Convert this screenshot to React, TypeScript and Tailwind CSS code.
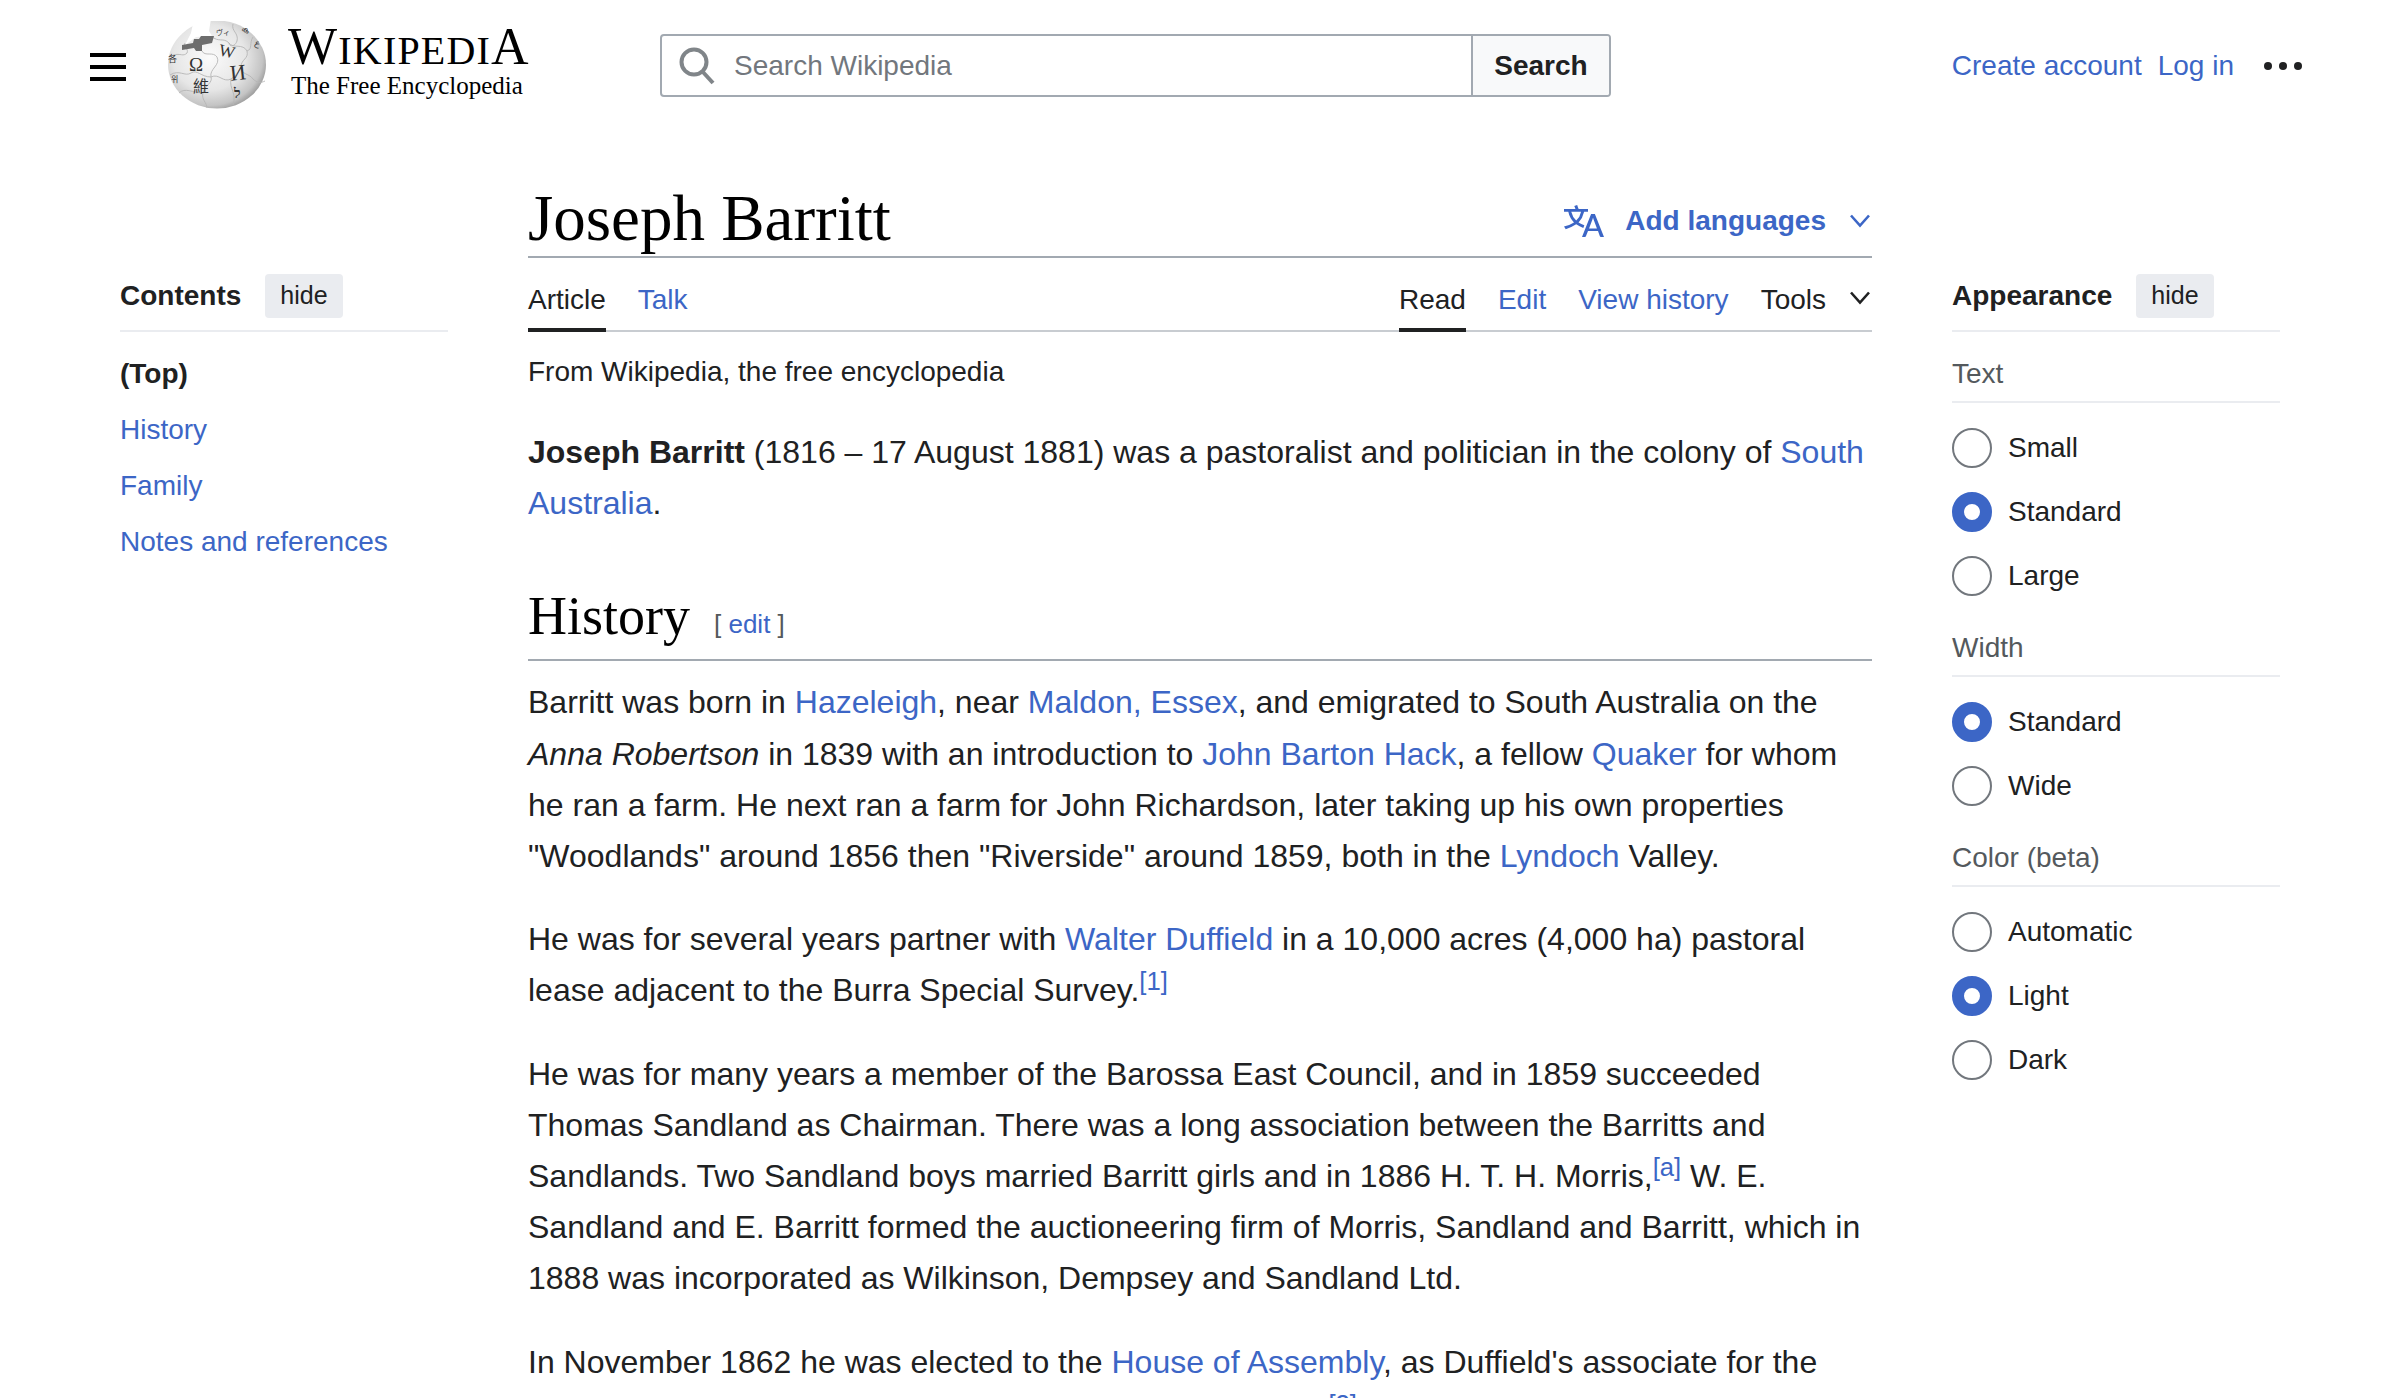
import React from 'react';

const serif = "font-['Liberation_Serif','Times_New_Roman',serif]";
const blue = '#3c66c6';

const contents = ['History', 'Family', 'Notes and references'];

const appearance = [
    { label: 'Text', options: ['Small', 'Standard', 'Large'], selected: 'Standard' },
    { label: 'Width', options: ['Standard', 'Wide'], selected: 'Standard' },
    { label: 'Color (beta)', options: ['Automatic', 'Light', 'Dark'], selected: 'Light' },
];

const A: React.FC<{ children: React.ReactNode }> = ({ children }) => (
    <a href="#" className="text-[#3c66c6]">{children}</a>
);

const Sup: React.FC<{ children: React.ReactNode }> = ({ children }) => (
    <sup className="text-[25.6px] leading-none text-[#3c66c6] top-[-11px]">{children}</sup>
);

const Chevron: React.FC<{ color: string }> = ({ color }) => (
    <svg width="20" height="14" viewBox="0 0 20 14" fill="none" stroke={color} strokeWidth="2.6">
        <path d="M1 1.5 L10 11.5 L19 1.5" />
    </svg>
);

const Globe: React.FC = () => (
    <svg width="100" height="90" viewBox="19 12 100 90" className="shrink-0">
        <defs>
            <radialGradient id="globe" cx="0.42" cy="0.42" r="0.62">
                <stop offset="0" stopColor="#fbfbfb" />
                <stop offset="0.6" stopColor="#e6e6e6" />
                <stop offset="0.88" stopColor="#c4c4c4" />
                <stop offset="1" stopColor="#999999" />
            </radialGradient>
        </defs>
        <ellipse cx="68" cy="55.5" rx="49" ry="44" fill="url(#globe)" />
        <g fill="none" stroke="#b5b5b5" strokeWidth="0.9">
            <path d="M24 46 C32 44 34 48 38 44 C40 40 34 38 36 34" />
            <path d="M53 42 C56 48 64 42 68 48 C72 56 60 60 62 68 C64 74 56 76 54 84 C52 90 58 94 58 99" />
            <path d="M62 27 C70 34 74 28 80 34 C84 40 94 34 98 42 C100 50 92 50 92 58 C92 66 100 64 104 70 C108 74 112 74 116 72" />
            <path d="M21 66 C30 60 36 68 42 64 C48 60 52 68 62 68" />
            <path d="M84 15 C82 22 90 24 88 32 C86 38 80 38 80 34" />
            <path d="M62 68 C70 64 74 74 82 70 C88 66 90 62 92 58" />
            <path d="M82 70 C80 80 88 84 84 96" />
            <path d="M30 84 C36 78 44 84 54 84" />
            <path d="M104 28 C100 34 104 40 98 42" />
        </g>
        <path d="M45 10 L62 10 L60 22 L63 27 L47 28 L36 36 L42 24 Z" fill="#ffffff" />
        <path d="M33 36 L44 34 L45 30 L50 30 L52 27 L65 27 L63 34 L53 36 L53 42 L47 42 L45 39 L33 41 Z" fill="#6d6d6d" />
        <g fill="#333333" className={serif}>
            <text x="40" y="62" fontSize="19">Ω</text>
            <text x="70" y="48" fontSize="17" transform="rotate(12 78 42)">W</text>
            <text x="81" y="71" fontSize="22" transform="rotate(-6 88 64)">И</text>
            <text x="44" y="83" fontSize="16" className="font-['Noto_Sans_CJK_TC',sans-serif]">維</text>
            <text x="85" y="89" fontSize="14" fontWeight="700">ל</text>
            <text x="67" y="26" fontSize="7" className="font-['Noto_Sans_CJK_JP',sans-serif]">ヴィ</text>
            <text x="105" y="36" fontSize="9" transform="rotate(20 105 36)">ع</text>
            <text x="19" y="53" fontSize="9" className="font-['Noto_Sans_CJK_SC',sans-serif]">各</text>
            <text x="92" y="21" fontSize="8" transform="rotate(30 92 21)">ക</text>
            <text x="22" y="73" fontSize="8" className="font-['Noto_Sans_CJK_KR',sans-serif]">위</text>
        </g>
    </svg>
);

const Header: React.FC = () => (
    <header className="h-[132px] flex items-start text-[#202122]">
        <div className="ml-[90px] mt-[53px] w-[36px] flex flex-col gap-[8px]">
            <div className="h-[4px] bg-black"></div>
            <div className="h-[4px] bg-black"></div>
            <div className="h-[4px] bg-black"></div>
        </div>
        <div className="ml-[42px] mt-[21px]">
            <Globe />
        </div>
        <div className={`ml-[20px] mt-[22px] w-[240px] text-black ${serif}`}>
            <div className="h-[49px] leading-[49px] whitespace-nowrap tracking-[1.2px]">
                <span className="text-[52px]">W</span>
                <span className="text-[40px]">IKIPEDI</span>
                <span className="text-[52px]">A</span>
            </div>
            <div className="ml-[3px] text-[25px] leading-[30px] whitespace-nowrap">The Free Encyclopedia</div>
        </div>
        <div className="ml-[132px] mt-[34px] w-[951px] h-[63px] flex border-2 border-[#a2a9b1] rounded-[4px]">
            <div className="flex-1 flex items-center">
                <svg width="38" height="38" viewBox="0 0 38 38" fill="none" stroke="#808589" strokeWidth="4" className="ml-[17px]">
                    <circle cx="15" cy="15" r="12.5" />
                    <path d="M23 24 L34 36" />
                </svg>
                <span className="ml-[17px] pt-[1px] text-[28px] text-[#72777d]">Search Wikipedia</span>
            </div>
            <div className="w-[138px] bg-[#f8f9fa] border-l-2 border-[#a2a9b1] flex items-center justify-center text-[28px] font-bold rounded-r-[2px]">Search</div>
        </div>
        <div className="ml-auto mr-[98px] mt-[46px] flex items-center text-[28px] leading-[40px] text-[#3c66c6]">
            <a href="#">Create account</a>
            <a href="#" className="ml-[16px]">Log in</a>
            <div className="ml-[30px] flex gap-[7px]">
                <div className="w-[8px] h-[8px] rounded-full bg-[#202122]"></div>
                <div className="w-[8px] h-[8px] rounded-full bg-[#202122]"></div>
                <div className="w-[8px] h-[8px] rounded-full bg-[#202122]"></div>
            </div>
        </div>
    </header>
);

const SideTitle: React.FC<{ title: string }> = ({ title }) => (
    <div className="flex items-center gap-6 pb-3 border-b-2 border-[#eaecf0]">
        <span className="text-[28px] font-bold text-[#202122]">{title}</span>
        <button className="h-[44px] px-[15px] rounded-[4px] bg-[#eaecf0] text-[25px] text-[#202122]">hide</button>
    </div>
);

const Radio: React.FC<{ label: string; on: boolean }> = ({ label, on }) => (
    <div className="h-10 flex items-center gap-4">
        <div className={on ? 'w-10 h-10 rounded-full border-[12px] border-[#3c66c6] bg-white' : 'w-10 h-10 rounded-full border-2 border-[#72777d] bg-white'}></div>
        <span className="text-[28px] text-[#202122]">{label}</span>
    </div>
);

const Tabs: React.FC = () => (
    <nav className="h-[74px] flex justify-between border-b-2 border-[#c8ccd1] text-[28px]">
        <div className="flex gap-8">
            <span className="pt-[21px] h-[74px] border-b-4 border-[#202122] text-[#202122]">Article</span>
            <a href="#" className="pt-[21px] text-[#3c66c6]">Talk</a>
        </div>
        <div className="flex gap-8">
            <span className="pt-[21px] h-[74px] border-b-4 border-[#202122] text-[#202122]">Read</span>
            <a href="#" className="pt-[21px] text-[#3c66c6]">Edit</a>
            <a href="#" className="pt-[21px] text-[#3c66c6]">View history</a>
            <div className="pt-[21px] flex items-start gap-[24px] text-[#202122]">
                Tools
                <span className="pt-[12px] pr-[2px]"><Chevron color="#202122" /></span>
            </div>
        </div>
    </nav>
);

const Article: React.FC = () => (
    <main className="w-[1344px] text-[#202122]">
        <div className="h-[126px] flex items-end justify-between border-b-2 border-[#a2a9b1]">
            <h1 className={`text-[65px] leading-[76px] text-[#000000] ${serif}`}>Joseph Barritt</h1>
            <div className="flex items-center pb-[14px] text-[#3c66c6]">
                <svg width="40" height="40" viewBox="0 0 20 20" fill={blue}>
                    <path d="M20 18h-1.44a.6.6 0 0 1-.4-.12.8.8 0 0 1-.23-.31L17 15h-5l-1 2.54a.8.8 0 0 1-.22.3.6.6 0 0 1-.4.14H9l4.55-11.47h1.89zm-3.53-4.31L14.89 9.5a12 12 0 0 1-.39-1.24q-.09.37-.19.69l-.19.56-1.58 4.19zm-6.3-1.58a13.4 13.4 0 0 1-2.91-1.41 11.46 11.46 0 0 0 2.81-5.37H12V4H7.31a4 4 0 0 0-.2-.56C6.87 2.79 6.6 2 6.6 2l-1.47.5s.4.89.6 1.5H0v1.33h2.15A11.23 11.23 0 0 0 5 10.7a17.2 17.2 0 0 1-5 2.1q.56.82.87 1.38a23.3 23.3 0 0 0 5.22-2.51 15.6 15.6 0 0 0 3.56 1.77zM3.63 5.33h4.91a8.1 8.1 0 0 1-2.45 4.45 9.1 9.1 0 0 1-2.46-4.45" />
                </svg>
                <span className="ml-[21px] text-[28px] font-bold">Add languages</span>
                <span className="ml-[24px] pr-[2px]"><Chevron color={blue} /></span>
            </div>
        </div>
        <Tabs />
        <div className="mt-5 text-[28px] leading-10">From Wikipedia, the free encyclopedia</div>
        <div className="mt-[35px] text-[32px] leading-[51.2px]">
            <p>
                <b>Joseph Barritt</b> (1816 – 17 August 1881) was a pastoralist and politician in the colony of <A>South Australia</A>.
            </p>
            <h2 className="mt-[55px] mb-4 h-[77px] flex items-center pb-[11px] border-b-2 border-[#a2a9b1]">
                <span className={`text-[54px] leading-[60px] text-[#000000] ${serif}`}>History</span>
                <span className="ml-[24px] mt-[17px] text-[26px] text-[#54595d]">[ <A>edit</A> ]</span>
            </h2>
            <p className="mb-8">
                Barritt was born in <A>Hazeleigh</A>, near <A>Maldon, Essex</A>, and emigrated to South Australia on the <i>Anna Robertson</i> in 1839 with an introduction to <A>John Barton Hack</A>, a fellow <A>Quaker</A> for whom he ran a farm. He next ran a farm for John Richardson, later taking up his own properties "Woodlands" around 1856 then "Riverside" around 1859, both in the <A>Lyndoch</A> Valley.
            </p>
            <p className="mb-8">
                He was for several years partner with <A>Walter Duffield</A> in a 10,000 acres (4,000 ha) pastoral lease adjacent to the Burra Special Survey.<Sup>[1]</Sup>
            </p>
            <p className="mb-8">
                He was for many years a member of the Barossa East Council, and in 1859 succeeded Thomas Sandland as Chairman. There was a long association between the Barritts and Sandlands. Two Sandland boys married Barritt girls and in 1886 H. T. H. Morris,<Sup>[a]</Sup> W. E. Sandland and E. Barritt formed the auctioneering firm of Morris, Sandland and Barritt, which in 1888 was incorporated as Wilkinson, Dempsey and Sandland Ltd.
            </p>
            <p>
                In November 1862 he was elected to the <A>House of Assembly</A>, as Duffield's associate for the seat of Barossa, and held the seat until early April, 1865.<Sup>[2]</Sup>
            </p>
        </div>
    </main>
);

export default function App() {
    return (
        <div className="h-screen overflow-hidden bg-white font-['Liberation_Sans',Arial,sans-serif]">
            <Header />
            <div className="flex items-start gap-20 pl-[120px]">
                <aside className="w-[328px] mt-[142px]">
                    <SideTitle title="Contents" />
                    <div className="mt-[22px] flex flex-col gap-4 text-[28px] leading-10">
                        <span className="font-bold text-[#202122]">(Top)</span>
                        {contents.map((item) => (
                            <a key={item} href="#" className="text-[#3c66c6]">{item}</a>
                        ))}
                    </div>
                </aside>
                <Article />
                <aside className="w-[328px] mt-[142px]">
                    <SideTitle title="Appearance" />
                    {appearance.map((group, i) => (
                        <div key={group.label} className={i === 0 ? 'mt-[22px]' : 'mt-8'}>
                            <div className="pb-[7px] border-b-2 border-[#eaecf0] text-[28px] leading-10 text-[#54595d]">{group.label}</div>
                            <div className="mt-[25px] flex flex-col gap-6">
                                {group.options.map((option) => (
                                    <Radio key={option} label={option} on={option === group.selected} />
                                ))}
                            </div>
                        </div>
                    ))}
                </aside>
            </div>
        </div>
    );
}
